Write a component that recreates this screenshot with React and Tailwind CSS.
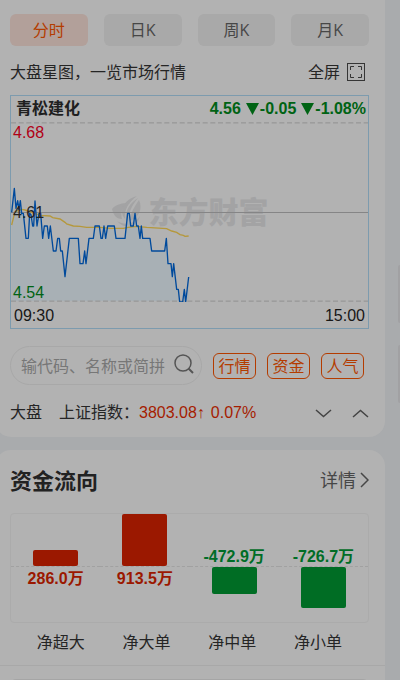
import React from "react";

const SANS = "font-['Liberation_Sans','Noto_Sans_CJK_SC',sans-serif]";
const CJK = "font-['Open_Sans','Noto_Sans_CJK_SC',sans-serif]";

const tabs = ["分时", "日K", "周K", "月K"];
const tags = ["行情", "资金", "人气"];

const price =
  "35,37 43,-35 48,25 53,2 57,28 61,2 65,40 70,40 78,115 85,115 89,40 93,44 98,78 101,78 105,3 111,78 117,40 122,40 128,115 133,78 142,78 146,115 151,78 160,153 168,153 173,115 178,115 182,153 187,153 195,230 208,115 235,115 240,191 249,191 254,153 258,191 267,115 280,115 285,78 298,78 303,115 307,115 312,78 317,115 323,78 343,78 348,115 375,115 383,40 388,40 392,78 400,78 405,40 410,78 415,78 420,115 424,78 428,115 450,115 455,153 494,153 499,115 504,191 513,191 517,230 521,191 530,268 535,268 539,306 548,306 553,268 557,306 566,231";
const average =
  "35,75 45,35 65,28 75,30 120,46 150,48 158,53 180,57 195,67 200,72 220,78 240,79 260,82 300,82 330,85 370,85 385,82 410,79 440,82 500,86 515,93 530,97 540,104 550,106 555,109 566,108";

const flows = [
  { name: "净超大", value: "286.0万", height: 16, up: true },
  { name: "净大单", value: "913.5万", height: 52, up: true },
  { name: "净中单", value: "-472.9万", height: 27, up: false },
  { name: "净小单", value: "-726.7万", height: 41, up: false },
];

function Tabs() {
  return (
    <div className={`grid grid-cols-4 gap-4 ${CJK}`}>
      {tabs.map((t, i) => (
        <button
          key={t}
          className={
            "h-8 rounded-md text-base " +
            (i === 0 ? "bg-[#b2a09a] text-[#b43c00]" : "bg-[#a9a9a9] text-[#474747]")
          }
        >
          {t}
        </button>
      ))}
    </div>
  );
}

function Watermark() {
  return (
    <div className="absolute inset-0 flex items-center justify-center gap-1 text-[#a3a3a4]">
      <svg width="34" height="32" viewBox="0 0 32 32" fill="currentColor" aria-hidden="true">
        <path d="M0 13C4 8 10 7 18 7C11 11 8 15 10 23C4 23 1 18 0 13Z" />
        <path d="M25 0C17 2 10 8 10 15C10 18 11 21 13 23C12 13 17 6 25 0Z" />
        <path d="M26 2C18 7 13 14 14 24L17 25C16 17 20 9 26 2Z" />
        <path d="M27 4C31 13 27 21 18 25C18 17 23 10 27 4Z" />
        <path d="M5 25C13 30 23 28 28 20C26 30 14 35 5 25Z" />
      </svg>
      <span className={`text-3xl font-black leading-8 ${CJK}`}>东方财富</span>
    </div>
  );
}

function Chart() {
  return (
    <div className={`border border-[#7d9bae] text-base ${SANS}`}>
      <div className="flex h-[26px] items-center justify-between pl-[5px] pr-[2px] font-bold">
        <span className="leading-6 text-[#1f1f1f]">青松建化</span>
        <span className="flex gap-[5px] text-[#006314]">
          <span>4.56</span>
          {["-0.05", "-1.08%"].map((v) => (
            <span key={v} className="flex items-center gap-px">
              <svg width="13" height="12" viewBox="0 0 13 12" fill="currentColor" aria-hidden="true">
                <path d="M0 0H13L6.5 12Z" />
              </svg>
              {v}
            </span>
          ))}
        </span>
      </div>
      <div className="relative h-[180px]">
        <Watermark />
        <svg
          className="relative block h-full w-full"
          viewBox="33 -234 1071 540"
          preserveAspectRatio="none"
          fill="none"
          role="img"
          aria-label="分时走势"
        >
          <polygon points={`35,303 ${price} 566,303`} fill="#a5afb5" fillOpacity="0.8" />
          <path d="M33 -231.5H1104M33 303.5H1104" stroke="#979797" strokeWidth="4" strokeDasharray="15 8" />
          <path d="M33 37.5H1104" stroke="#858586" strokeWidth="3" />
          <polyline points={average} stroke="#b5983c" strokeWidth="4" />
          <polyline points={price} stroke="#004a9c" strokeWidth="4" strokeLinejoin="round" />
        </svg>
        <div className="absolute inset-y-0 left-[2px] flex flex-col justify-between pt-[2px] leading-[18px]">
          <span className="text-[#b00016]">4.68</span>
          <span className="text-[#222222]">4.61</span>
          <span className="text-[#006314]">4.54</span>
        </div>
      </div>
      <div className="flex h-[26px] items-center justify-between px-[3px] pt-px text-[#171717]">
        <span>09:30</span>
        <span>15:00</span>
      </div>
    </div>
  );
}

function Search() {
  return (
    <form className={`flex items-center justify-between gap-[11px] text-base ${CJK}`}>
      <label className="flex h-[39px] min-w-0 flex-1 items-center rounded-full border border-[#a8a8a8] pl-[10px] pr-[7px]">
        <input
          type="text"
          aria-label="搜索股票"
          placeholder="输代码、名称或简拼"
          className="min-w-0 flex-1 bg-transparent outline-none placeholder:text-[#777777]"
        />
        <svg className="mb-1" width="20" height="20" viewBox="0 0 20 20" fill="none" stroke="#555555" strokeWidth="1.5" aria-hidden="true">
          <circle cx="9" cy="9" r="8" />
          <path d="M14.5 14.5L19 19" strokeWidth="2" />
        </svg>
      </label>
      <div className="flex gap-[11px] pr-[5px]">
        {tags.map((t) => (
          <button
            key={t}
            type="button"
            className="h-[26px] w-[43px] rounded-md border border-[#b43c00] leading-6 text-[#b43c00]"
          >
            {t}
          </button>
        ))}
      </div>
    </form>
  );
}

function MarketLine() {
  return (
    <div className={`flex items-center text-base leading-6 text-[#252525] ${SANS}`}>
      <span className="w-[49px]">大盘</span>
      <span>上证指数：</span>
      <span className="text-[#a51c00]">3803.08↑</span>
      <span className="ml-[6px] text-[#a51c00]">0.07%</span>
      <span className="ml-auto flex gap-5">
        <button type="button" aria-label="下一个">
          <svg width="17" height="9" viewBox="0 0 17 9" fill="none" stroke="#444444" strokeWidth="1.5">
            <path d="M1 1L8.5 7.5L16 1" />
          </svg>
        </button>
        <button type="button" aria-label="上一个">
          <svg width="17" height="9" viewBox="0 0 17 9" fill="none" stroke="#444444" strokeWidth="1.5">
            <path d="M1 8L8.5 1.5L16 8" />
          </svg>
        </button>
      </span>
    </div>
  );
}

function FlowChart() {
  return (
    <div className={`text-base ${SANS}`}>
      <div className="grid h-[110px] grid-cols-4 rounded-sm border border-[#ababab] font-bold">
        {flows.map((f) => (
          <div key={f.name} className="grid grid-rows-[53px_55px]">
            <div className="flex flex-col items-center justify-end border-b border-dashed border-[#a1a1a1]">
              {f.up ? (
                <div className="w-[45px] rounded-xs bg-[#9b1800]" style={{ height: f.height }} />
              ) : (
                <span className="leading-[18px] text-[#006d26]">{f.value}</span>
              )}
            </div>
            <div className="flex flex-col items-center">
              {f.up ? (
                <span className="leading-6 text-[#9b1800]">{f.value}</span>
              ) : (
                <div className="w-[45px] rounded-xs bg-[#006d24]" style={{ height: f.height }} />
              )}
            </div>
          </div>
        ))}
      </div>
      <div className="grid grid-cols-4 px-2 pt-2 text-center leading-6 text-[#252525]">
        {flows.map((f) => (
          <span key={f.name}>{f.name}</span>
        ))}
      </div>
    </div>
  );
}

export default function App() {
  return (
    <main className="relative h-screen overflow-hidden bg-[#a9abad] pr-[15px]">
      <section className="-ml-[5px] rounded-b-2xl bg-[#b2b2b2] pb-3 pl-[15px] pr-4 pt-[14px]">
        <Tabs />
        <div className={`flex items-center justify-between pb-[11px] pt-[14px] text-base leading-6 text-[#252525] ${CJK}`}>
          <span>大盘星图，一览市场行情</span>
          <button type="button" className="flex items-center gap-[7px] pr-1">
            全屏
            <svg width="18" height="18" viewBox="0 0 18 18" fill="none" stroke="#353535" aria-hidden="true">
              <rect x="0.5" y="0.5" width="17" height="17" />
              <path d="M3.5 7V3.5H7M11 3.5H14.5V7M14.5 11V14.5H11M7 14.5H3.5V11" />
            </svg>
          </button>
        </div>
        <Chart />
        <div className="pb-4 pt-[17px]">
          <Search />
        </div>
        <MarketLine />
      </section>

      <section className="-ml-[5px] mt-[13px] rounded-t-2xl bg-[#b2b2b2]">
        <div className="pl-[15px] pr-4 pt-[14px]">
          <div className={`flex items-center justify-between pb-[17px] leading-8 ${CJK}`}>
            <h2 className="text-[22px] font-bold leading-8 text-[#222222]">资金流向</h2>
            <a href="#detail" className="flex items-center gap-1 text-lg leading-8 text-[#474747]">
              详情
              <svg width="9" height="16" viewBox="0 0 9 16" fill="none" stroke="currentColor" strokeWidth="1.5" aria-hidden="true">
                <path d="M1 1L8 8L1 15" />
              </svg>
            </a>
          </div>
          <FlowChart />
        </div>
        <div className="mt-[10px] border-t border-[#a8a8a8] pb-4 pl-[15px] pr-4 pt-[13px]">
          <div className="h-10 rounded-md border border-[#a5a5a5]" />
        </div>
      </section>

      <div className="absolute right-0 top-[265px] flex w-[2px] flex-col gap-[22px]">
        <div className="h-[58px] rounded-l-sm bg-[#a1a1a3]" />
        <div className="h-[58px] rounded-l-sm bg-[#a1a1a3]" />
      </div>
    </main>
  );
}
